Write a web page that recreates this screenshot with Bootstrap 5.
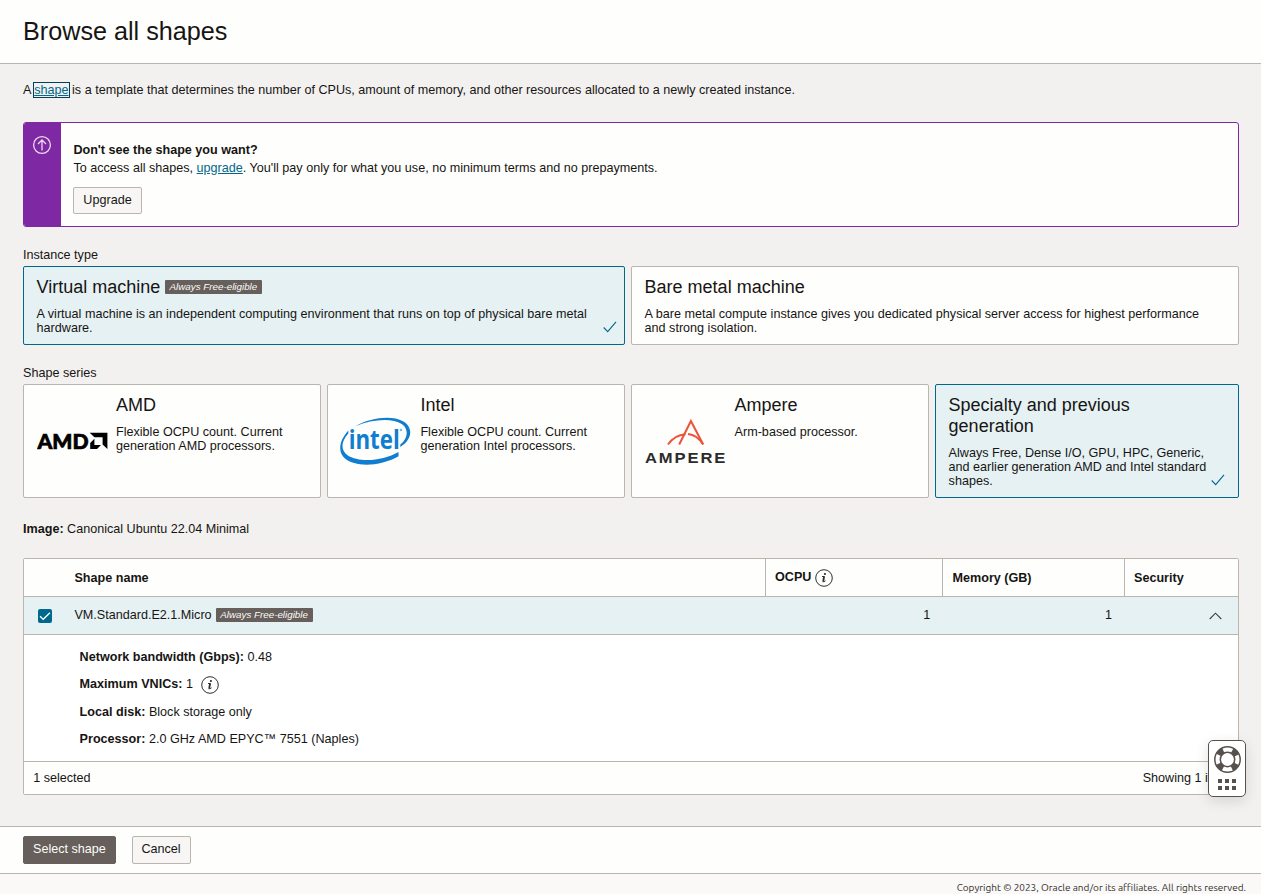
<!DOCTYPE html>
<html lang="en">
<head>
<meta charset="utf-8">
<meta name="viewport" content="width=device-width, initial-scale=1">
<title>Browse all shapes</title>
<link rel="stylesheet" href="https://cdn.jsdelivr.net/npm/bootstrap@5.3.0/dist/css/bootstrap.min.css">
<style>
:root{--line:#bbb5ae;--teal:#00688c;--ink:#161513;--paper:#fefefc;--brown:#665f5b}
body{font-family:"Liberation Sans",Arial,sans-serif;font-size:12.6px;line-height:14px;color:var(--ink);background:#f3f1f0;height:894px;overflow:hidden}
a{color:var(--teal)}
.page-head{height:64px;background:var(--paper);border-bottom:1px solid var(--line);padding:0 23px}
.page-head h1{font-size:25.2px;line-height:29px;margin:17px 0 0}
main{height:762px;padding:0 22px 0 23px}
.intro{padding-top:19px;height:58px}
.focus-link{outline:1px solid #00415e;outline-offset:0;display:inline-block;line-height:14px}
.upsell{height:105px;border:1px solid #7f28a3;border-radius:3px;background:var(--paper);overflow:hidden}
.upsell-strip{width:37px;background:#7f28a3;padding:12px 2px 0 0}
.upsell-body{padding:18px 12.4px;line-height:18px}
.btn-plain,.btn-main{font-size:12.6px;line-height:14px;border-radius:2px;border:1px solid var(--line);background:#f8f6f5;color:var(--ink);padding:5px 9px 7px}
.btn-main{background:var(--brown);border-color:var(--brown);color:#fcfbfa}
.btn-up{margin:10px 0 0 -.4px;height:27px;width:69px;padding-left:0;padding-right:0}
.group-title{line-height:14px;padding:21px 0 4px}
.tile{border:1px solid var(--line);border-radius:2px;background:var(--paper);padding:10px 12.6px 8px}
.tile.chosen{border-color:var(--teal);background:#e6f1f4}
.tile h2{font-size:18px;line-height:21px;margin:0 0 9px}
.tick{position:absolute;right:7px;bottom:11px}
.tick-far{right:13px}
.tag{font-size:9.8px;font-style:italic;font-weight:400;line-height:14px;height:14px;background:var(--brown);color:#fcfbfa;border-radius:1px;display:inline-block;width:97px;text-align:center;white-space:nowrap}
.types,.series{display:grid;gap:6px}
.types{grid-template-columns:602px 608px;height:79px}
.series{grid-template-columns:298px 298px 298px 304px;height:114px}
.shape-grid{border:1px solid var(--line);border-radius:2px;background:#fff;height:237px;margin-top:22px}
.grid-row{display:grid;grid-template-columns:741px 177px 182px 114px;border-bottom:1px solid var(--line)}
.grid-head{height:38px;font-weight:700;background:var(--paper)}
.grid-head>div+div{border-left:1px solid var(--line);padding-left:9px}
.grid-pick{height:38px;background:#e6f1f4}
.checkbox-on{width:14px;height:14px;border-radius:2px;background:var(--teal);margin:1px 23px 0 14px}
.details{height:127px;padding:15px 0 0 55.6px;border-bottom:1px solid var(--line)}
.details>div{height:27.4px}
.grid-foot{height:32px;padding:0 9.2px;background:var(--paper)}
.help-box{position:fixed;left:1208px;top:740px;width:38px;height:57px;border:1px solid #57514e;border-radius:5px;background:#fff;box-shadow:0 4px 14px rgba(0,0,0,.12)}
.actions{height:48px;background:var(--paper);border-top:1px solid var(--line);border-bottom:1px solid var(--line);padding:9px 23px 0;gap:16px}
.actions .btn{height:28px}
.legal{height:20px;background:#faf9f8;font-family:Ubuntu,"Noto Sans","Open Sans",sans-serif;font-size:10px;line-height:12px;padding:8px 15px 0 0;color:#312d2a}
svg{display:block;flex:none}
</style>
</head>
<body>
<svg width="0" height="0" class="position-absolute" aria-hidden="true">
  <symbol id="info" viewBox="0 0 18 18"><circle cx="9" cy="9" r="8.3" fill="none" stroke="#312d2a"/><path d="M7 7.500h2.600" fill="none" stroke="#312d2a"/><path d="M9.100 7.500 8.200 12.300" fill="none" stroke="#312d2a" stroke-width="1.800"/><path d="M7.500 12.700q1.600.4 3-.9" fill="none" stroke="#312d2a"/><circle cx="9.900" cy="5" r="1.100" fill="#312d2a"/></symbol>
</svg>
<header class="page-head"><h1 class="fw-normal d-inline-block">Browse all shapes</h1></header>
<main>
  <div class="intro">A <a href="#" class="focus-link">shape</a> is a template that determines the number of CPUs, amount of memory, and other resources allocated to a newly created instance.</div>
  <section class="upsell d-flex">
    <div class="upsell-strip d-flex justify-content-center align-items-start">
      <svg width="20" height="20" viewBox="0 0 20 20" fill="none" stroke="#eadcf0" stroke-width="1.3"><circle cx="10" cy="10" r="8.4"/><path d="M10 15.500V5M6 9l4-4 4 4"/></svg>
    </div>
    <div class="upsell-body">
      <div class="fw-bold">Don't see the shape you want?</div>
      <div>To access all shapes, <a href="#">upgrade</a>. You'll pay only for what you use, no minimum terms and no prepayments.</div>
      <button class="btn btn-plain btn-up">Upgrade</button>
    </div>
  </section>

  <div class="group-title">Instance type</div>
  <section class="types">
    <div class="tile chosen position-relative">
      <h2 class="fw-normal d-flex align-items-center">Virtual machine <span class="tag" style="margin:-1px 0 0 4.600px">Always Free-eligible</span></h2>
      <div class="pe-4">A virtual machine is an independent computing environment that runs on top of physical bare metal hardware.</div>
      <svg class="tick" width="14" height="12" viewBox="0 0 14 12" fill="none" stroke="#00688c" stroke-width="1.1"><path d="M.7 6.500 4.700 10.700 13 .8"/></svg>
    </div>
    <div class="tile">
      <h2 class="fw-normal">Bare metal machine</h2>
      <div class="pe-3">A bare metal compute instance gives you dedicated physical server access for highest performance and strong isolation.</div>
    </div>
  </section>

  <div class="group-title">Shape series</div>
  <section class="series">
    <div class="tile d-flex">
      <svg class="align-self-center" style="margin-top:-2px" width="71" height="32" viewBox="0 -6 71 32" role="img" aria-label="AMD">
        <text x=".5" y="17.600" font-family="Lato,sans-serif" font-size="21.500" font-weight="900" stroke="#000" stroke-width=".7" textLength="51" lengthAdjust="spacingAndGlyphs">AMD</text>
        <path d="M52.700 1.800H70.400V18L65.600 13.400V6.200H57.400ZM57.400 7.700V14H64L60 18H53.200V11.900Z"/>
      </svg>
      <div style="margin-left:8.400px"><h2 class="fw-normal">AMD</h2><div>Flexible OCPU count. Current generation AMD processors.</div></div>
    </div>
    <div class="tile d-flex">
      <svg class="align-self-center" style="margin:-2px 0 0 -.3px" width="71" height="48" viewBox="0 0 71 48" fill="#0f7dd0" role="img" aria-label="Intel">
        <path d="M15.400 9.300C31 .2 52 -1.700 63 4.200c10.500 5.800 9.500 18.500-2.700 25.800v-2.400c8-6.400 8.600-15.800 1.400-20.600C52.500.900 32.500 1.700 15.400 9.300Z"/>
        <path d="M8.300 13.500v3C.800 24.800.600 33.500 7.500 38.200c11 7.400 35 6.200 51-3.200v4.300c-17.500 10-42.500 11.500-53.500 2.300C-2.700 35-.800 23.500 8.300 13.500Z"/>
        <text x="8.700" y="32" font-family="Open Sans,sans-serif" font-size="27" font-weight="700" textLength="51" lengthAdjust="spacingAndGlyphs">intel</text>
        <circle cx="61" cy="13" r="1.200" opacity=".55"/>
      </svg>
      <div style="margin-left:9.100px"><h2 class="fw-normal">Intel</h2><div>Flexible OCPU count. Current generation Intel processors.</div></div>
    </div>
    <div class="tile d-flex">
      <svg class="align-self-center" style="margin-top:-2px" width="83" height="50" viewBox="0 -2 83 50" role="img" aria-label="Ampere">
        <g fill="none" stroke="#ed5338" stroke-width="2"><path d="M34.200 26.500 45.900 3 58.200 26.500"/><path d="M23 26.500c4.500-6.500 10-9.800 17.500-10.300M43 16c6.500.6 11 4 15 10.300"/></g>
        <text x="0" y="44.800" font-size="14.800" font-weight="700" fill="#2b2b2b" font-family="Liberation Sans,sans-serif" letter-spacing="1.700" transform="scale(1.120 1)">AMPERE</text>
      </svg>
      <div style="margin-left:7px"><h2 class="fw-normal">Ampere</h2><div>Arm-based processor.</div></div>
    </div>
    <div class="tile chosen position-relative">
      <h2 class="fw-normal pe-5">Specialty and previous generation</h2>
      <div class="pe-3">Always Free, Dense I/O, GPU, HPC, Generic, and earlier generation AMD and Intel standard shapes.</div>
      <svg class="tick tick-far" width="14" height="12" viewBox="0 0 14 12" fill="none" stroke="#00688c" stroke-width="1.1"><path d="M.7 6.500 4.700 10.700 13 .8"/></svg>
    </div>
  </section>

  <div style="padding-top:24px"><b>Image:</b> Canonical Ubuntu 22.04 Minimal</div>

  <section class="shape-grid">
    <div class="grid-row grid-head">
      <div class="d-flex align-items-center" style="padding-left:50.400px">Shape name</div>
      <div class="d-flex align-items-center"><span style="margin-top:-2px">OCPU</span>
        <svg class="ms-1" width="18" height="18"><use href="#info"/></svg>
      </div>
      <div class="d-flex align-items-center" style="padding-left:9.500px">Memory (GB)</div>
      <div class="d-flex align-items-center">Security</div>
    </div>
    <div class="grid-row grid-pick">
      <div class="d-flex align-items-center">
        <span class="checkbox-on"><svg width="14" height="14" viewBox="0 0 14 14" fill="none" stroke="#fff" stroke-width="1.300"><path d="M2 7.300 5.200 10.300 12 3.800"/></svg></span>
        <span style="margin:-2px 4px 0 -.6px">VM.Standard.E2.1.Micro</span><span class="tag" style="margin-top:-2px">Always Free-eligible</span>
      </div>
      <div class="d-flex align-items-center justify-content-end" style="padding-right:11.700px"><span style="margin-top:-2px">1</span></div>
      <div class="d-flex align-items-center justify-content-end" style="padding-right:12px"><span style="margin-top:-2px">1</span></div>
      <div class="d-flex align-items-center justify-content-end" style="padding-right:16.500px"><svg width="13" height="8" viewBox="0 0 13 8" fill="none" stroke="#45413e" stroke-width="1.100"><path d="M.7 7 6.500 1.200 12.300 7"/></svg></div>
    </div>
    <div class="details">
      <div><b>Network bandwidth (Gbps):</b> 0.48</div>
      <div class="d-flex align-items-start"><span><b>Maximum VNICs:</b> 1</span>
        <svg class="ms-2" style="margin-top:-1px" width="18" height="18"><use href="#info"/></svg></div>
      <div><b>Local disk:</b> Block storage only</div>
      <div><b>Processor:</b> 2.0 GHz AMD EPYC™ 7551 (Naples)</div>
    </div>
    <div class="grid-foot d-flex align-items-center justify-content-between"><span>1 selected</span><span>Showing 1 item</span></div>
  </section>
</main>
<footer>
  <div class="actions d-flex align-items-start">
    <button class="btn btn-main">Select shape</button>
    <button class="btn btn-plain" style="padding-left:8.600px;padding-right:9.400px">Cancel</button>
  </div>
  <div class="legal text-end">Copyright © 2023, Oracle and/or its affiliates. All rights reserved.</div>
</footer>
<div class="help-box">
  <svg width="36" height="55" viewBox="0 0 36 55" fill="none" stroke="#57514e">
    <circle cx="18.500" cy="18.500" r="10" stroke-width="6" stroke-dasharray="6.500 9.208" stroke-dashoffset="-4.600"/>
    <circle cx="18.500" cy="18.500" r="12.700" stroke-width="1.500"/><circle cx="18.500" cy="18.500" r="7.200" stroke-width="1.500"/>
    <path stroke="none" fill="#57514e" d="M9 38h4v4H9zM16 38h4v4h-4zM23 38h4v4h-4zM9 45h4v4H9zM16 45h4v4h-4zM23 45h4v4h-4z"/>
  </svg>
</div>
<script src="https://cdn.jsdelivr.net/npm/bootstrap@5.3.0/dist/js/bootstrap.bundle.min.js"></script>
</body>
</html>
